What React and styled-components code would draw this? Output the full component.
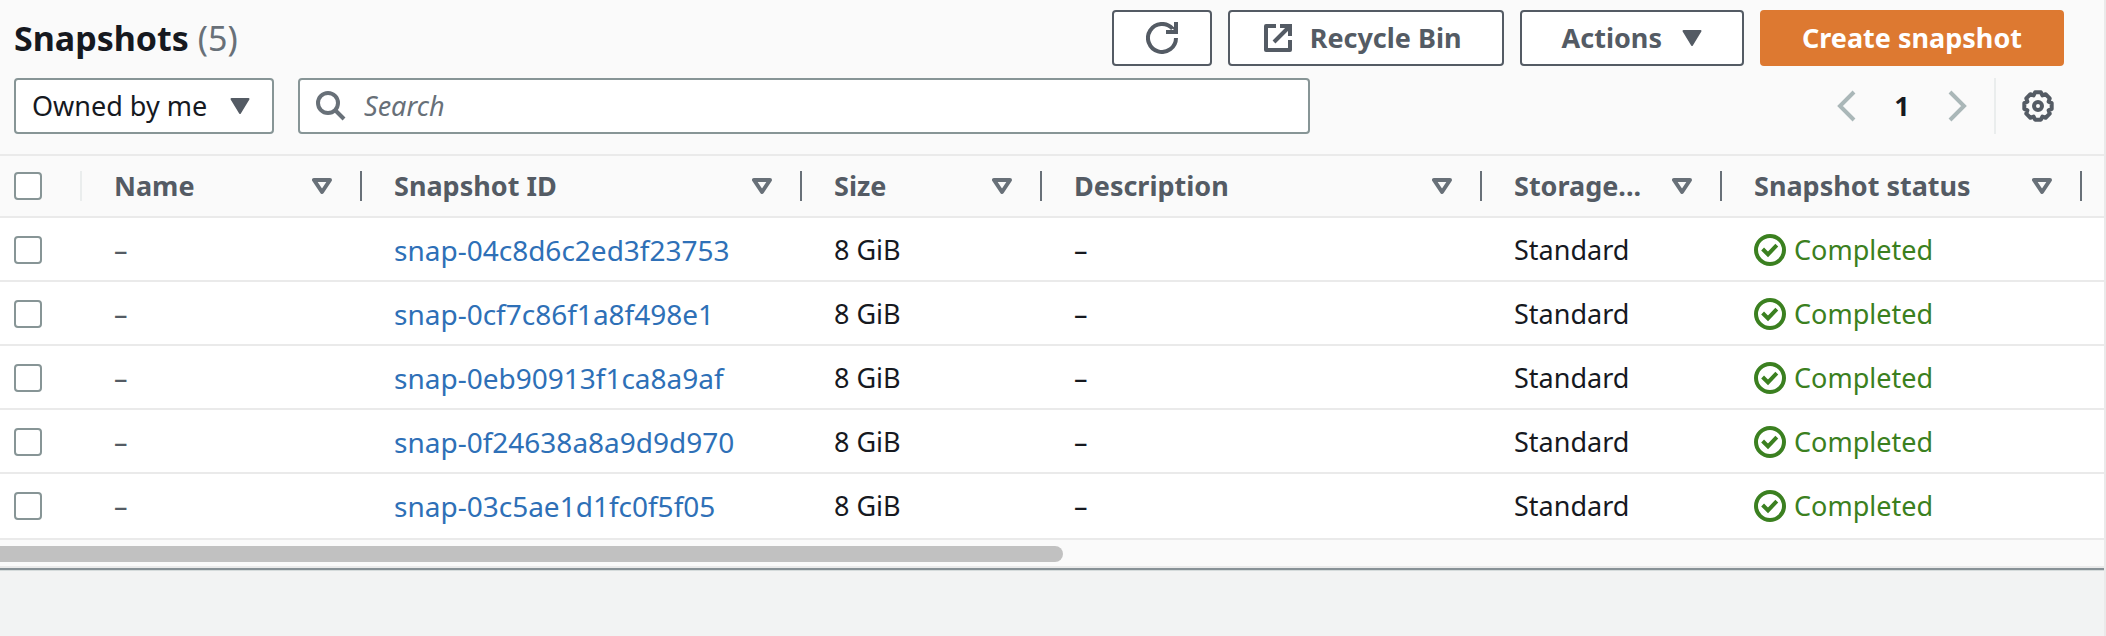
import React from 'react';
import styled, { createGlobalStyle, css } from 'styled-components';

const GlobalStyle = createGlobalStyle`
  * { box-sizing: border-box; }
  body {
    margin: 0;
    background: #f2f3f3;
    color: #16191f;
    font-family: "Noto Sans", "Open Sans", sans-serif;
    font-size: 27px;
    line-height: 36px;
  }
  button, input, select { font: inherit; color: inherit; }
`;

const Page = styled.main`
  min-height: 100vh;
  border-right: 2px solid #eaeaea;
`;

const Panel = styled.section`
  border-bottom: 2px solid #879196;
  background: #fafafa;
  box-shadow: 0 1px 0 #d5dbdb;
`;

const Header = styled.header`
  display: flex;
  flex-direction: column;
  gap: 12px;
  padding: 10px 40px 20px 14px;
  border-bottom: 2px solid #eaeaea;
`;

const HeaderRow = styled.div`
  display: flex;
  align-items: center;
  justify-content: space-between;
  gap: 24px;
`;

const Title = styled.h1`
  margin: 0;
  font-size: 34px;
  line-height: 44px;
  font-weight: 700;
`;

const Counter = styled.span`
  color: #687078;
  font-weight: 400;
`;

const ButtonGroup = styled.div`
  display: flex;
  gap: 16px;
`;

const Button = styled.button`
  display: flex;
  align-items: center;
  justify-content: center;
  gap: ${(p) => p.$gap || 16}px;
  height: 56px;
  padding: 0 ${(p) => p.$padRight || 40}px 0 ${(p) => p.$padLeft || 40}px;
  border: 2px solid ${(p) => (p.$primary ? '#dd7931' : '#545b64')};
  border-radius: 4px;
  background: ${(p) => (p.$primary ? '#dd7931' : '#fff')};
  color: ${(p) => (p.$primary ? '#fff' : '#545b64')};
  font-weight: 700;
  white-space: nowrap;
`;

const fieldBox = css`
  height: 56px;
  border: 2px solid #879596;
  border-radius: 4px;
  background: #fff;
`;

const SelectBox = styled.label`
  ${fieldBox}
  display: flex;
  align-items: center;
  flex: none;
  width: 260px;
  padding-right: 22px;
  color: #545b64;
`;

const Select = styled.select`
  flex: 1;
  height: 52px;
  padding: 0 0 0 16px;
  border: 0;
  background: transparent;
  color: #16191f;
  appearance: none;
`;

const SearchBox = styled.label`
  ${fieldBox}
  display: flex;
  align-items: center;
  gap: 18px;
  flex: 1;
  max-width: 1012px;
  padding: 0 16px;
  color: #687078;
`;

const SearchInput = styled.input`
  flex: 1;
  min-width: 0;
  padding: 0;
  border: 0;
  outline: 0;
  background: transparent;
  color: #16191f;
  &::placeholder {
    color: #687078;
    font-style: italic;
    opacity: 1;
  }
`;

const Filters = styled.div`
  display: flex;
  flex: 1;
  gap: 24px;
`;

const Pagination = styled.nav`
  display: flex;
  align-items: center;
  height: 56px;
`;

const IconButton = styled.button`
  display: flex;
  padding: 0;
  border: 0;
  background: transparent;
  color: ${(p) => (p.$muted ? '#aab7b8' : '#545b64')};
`;

const PageNumber = styled.button`
  width: 80px;
  padding: 0;
  border: 0;
  background: transparent;
  font-weight: 700;
`;

const Preferences = styled.div`
  display: flex;
  align-items: center;
  height: 56px;
  margin-left: 20px;
  padding: 0 10px 0 26px;
  border-left: 2px solid #eaeded;
`;

const TableScroll = styled.div`
  overflow: hidden;
`;

const Table = styled.table`
  width: 100%;
  table-layout: fixed;
  border-collapse: separate;
  border-spacing: 0;
`;

const Col = styled.col`
  width: ${(p) => (p.$width ? `${p.$width}px` : 'auto')};
`;

const HeadCell = styled.th`
  height: 62px;
  padding: 0;
  border-bottom: 2px solid #eaeaea;
  color: #545b64;
  text-align: left;
`;

const HeadContent = styled.div`
  display: flex;
  align-items: center;
  justify-content: space-between;
  gap: 16px;
  height: 30px;
  padding: 0 ${(p) => (p.$select ? 0 : 28)}px 0 ${(p) => (p.$select ? 14 : 32)}px;
  border-right: 2px solid ${(p) => (p.$select ? '#eaeded' : '#687078')};
`;

const HeadLabel = styled.span`
  white-space: nowrap;
`;

const SortButton = styled(IconButton)`
  color: #687078;
`;

const Cell = styled.td`
  height: 64px;
  padding: ${(p) => (p.$select ? '2px 0 0 14px' : '2px 32px 0')};
  border-bottom: 2px solid #eaeaea;
  color: ${(p) => (p.$muted ? '#545b64' : '#16191f')};
  white-space: nowrap;
`;

const Row = styled.tr`
  background: #fff;
  &:last-child ${Cell} {
    height: 66px;
    padding-top: 0;
  }
`;

const Checkbox = styled.input`
  display: block;
  flex: none;
  width: 28px;
  height: 28px;
  margin: 0;
  border: 2px solid #879596;
  border-radius: 4px;
  background: #fff;
  appearance: none;
`;

const Link = styled.a`
  color: #2e70b7;
  font-size: 28px;
  text-decoration: none;
`;

const Status = styled.span`
  display: flex;
  align-items: center;
  gap: 8px;
  color: #3b8020;
`;

const Track = styled.div`
  padding: 6px 0 4px;
  border-bottom: 2px solid #eaeaea;
`;

const Thumb = styled.div`
  width: 50.5%;
  height: 16px;
  border-radius: 0 8px 8px 0;
  background: #c1c1c1;
`;

const Svg = ({ size = 32, box = 16, children, ...rest }) => (
  <svg width={size} height={size} viewBox={`0 0 ${box} ${box}`} fill="none" stroke="currentColor" strokeWidth="2" aria-hidden="true" {...rest}>
    {children}
  </svg>
);

const RefreshIcon = () => (
  <Svg>
    <path d="M15 8a7 7 0 1 1-1.7-4.6" />
    <path d="M10 5h5V0" />
    <path d="M12 2 15 5V3z" fill="currentColor" stroke="none" />
  </Svg>
);

const ExternalIcon = () => (
  <Svg>
    <path d="M7 2H2v12h12V9" strokeLinejoin="round" />
    <path d="M9 2h5v5M14 2 6 10" />
  </Svg>
);

const CaretDown = () => (
  <Svg size={20} box={20}>
    <path d="M1.5 3h17L10 17z" fill="currentColor" strokeLinejoin="round" />
  </Svg>
);

const SortIcon = () => (
  <Svg size={20} box={20}>
    <path d="M2 4h16l-8 12z" strokeWidth="4" strokeLinejoin="round" />
  </Svg>
);

const SearchIcon = () => (
  <Svg size={30} box={30} strokeWidth="4">
    <circle cx="12" cy="12" r="10" />
    <path d="m19 19 9 9" />
  </Svg>
);

const Chevron = ({ next }) => (
  <Svg size={32} box={32} strokeWidth="4">
    <path d={next ? 'M8 2l14 14L8 30' : 'M24 2L10 16l14 14'} />
  </Svg>
);

// Eight teeth, each with two outer corners, and a valley between neighbours.
const gearPoints = Array.from({ length: 8 }, (_, tooth) =>
  [[14, -12], [14, 12], [11.5, 22.5]].map(([radius, offset]) => {
    const angle = ((tooth * 45 + offset) * Math.PI) / 180;
    return `${(16 + radius * Math.sin(angle)).toFixed(2)},${(16 - radius * Math.cos(angle)).toFixed(2)}`;
  })
).flat().join(' ');

const GearIcon = () => (
  <Svg size={32} box={32}>
    <polygon points={gearPoints} strokeWidth="4" strokeLinejoin="round" />
    <circle cx="16" cy="16" r="4" strokeWidth="4" />
  </Svg>
);

const CheckIcon = () => (
  <Svg>
    <circle cx="8" cy="8" r="7" />
    <path d="m4.3 7.5 2.7 2.7 4.4-4.6" />
  </Svg>
);

const columns = [
  { label: 'Name', width: 280 },
  { label: 'Snapshot ID', width: 440 },
  { label: 'Size', width: 240 },
  { label: 'Description', width: 440 },
  { label: 'Storage...', width: 240 },
  { label: 'Snapshot status', width: 360 },
];

const snapshots = [
  'snap-04c8d6c2ed3f23753',
  'snap-0cf7c86f1a8f498e1',
  'snap-0eb90913f1ca8a9af',
  'snap-0f24638a8a9d9d970',
  'snap-03c5ae1d1fc0f5f05',
];

export default function App() {
  return (
    <Page>
      <GlobalStyle />
      <Panel>
        <Header>
          <HeaderRow>
            <Title>
              Snapshots <Counter>(5)</Counter>
            </Title>
            <ButtonGroup>
              <Button $padLeft={32} $padRight={32} aria-label="Refresh"><RefreshIcon /></Button>
              <Button $padLeft={32}><ExternalIcon />Recycle Bin</Button>
              <Button $gap={20}>Actions<CaretDown /></Button>
              <Button $primary>Create snapshot</Button>
            </ButtonGroup>
          </HeaderRow>
          <HeaderRow>
            <Filters>
              <SelectBox>
                <Select aria-label="Ownership">
                  <option>Owned by me</option>
                </Select>
                <CaretDown />
              </SelectBox>
              <SearchBox>
                <SearchIcon />
                <SearchInput type="text" placeholder="Search" aria-label="Search" />
              </SearchBox>
            </Filters>
            <Pagination aria-label="Pages">
              <IconButton $muted aria-label="Previous page"><Chevron /></IconButton>
              <PageNumber>1</PageNumber>
              <IconButton $muted aria-label="Next page"><Chevron next /></IconButton>
              <Preferences>
                <IconButton aria-label="Preferences"><GearIcon /></IconButton>
              </Preferences>
            </Pagination>
          </HeaderRow>
        </Header>
        <TableScroll>
          <Table>
            <colgroup>
              <Col $width={82} />
              {columns.map((c) => <Col key={c.label} $width={c.width} />)}
              <Col />
            </colgroup>
            <thead>
              <tr>
                <HeadCell>
                  <HeadContent $select><Checkbox type="checkbox" aria-label="Select all" /></HeadContent>
                </HeadCell>
                {columns.map((c) => (
                  <HeadCell key={c.label}>
                    <HeadContent>
                      <HeadLabel>{c.label}</HeadLabel>
                      <SortButton aria-label={`Sort by ${c.label}`}><SortIcon /></SortButton>
                    </HeadContent>
                  </HeadCell>
                ))}
                <HeadCell />
              </tr>
            </thead>
            <tbody>
              {snapshots.map((id) => (
                <Row key={id}>
                  <Cell $select><Checkbox type="checkbox" aria-label={`Select ${id}`} /></Cell>
                  <Cell $muted>–</Cell>
                  <Cell><Link href={`#${id}`}>{id}</Link></Cell>
                  <Cell>8 GiB</Cell>
                  <Cell>–</Cell>
                  <Cell>Standard</Cell>
                  <Cell><Status><CheckIcon />Completed</Status></Cell>
                  <Cell />
                </Row>
              ))}
            </tbody>
          </Table>
        </TableScroll>
        <Track><Thumb /></Track>
      </Panel>
    </Page>
  );
}
